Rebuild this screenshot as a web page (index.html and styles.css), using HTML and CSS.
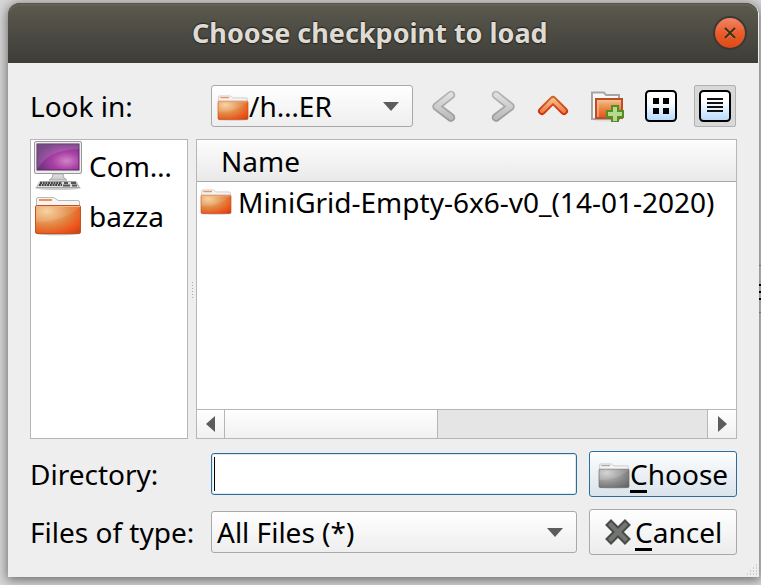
FILE: index.html
```
<!DOCTYPE html>
<html lang="en">
<head>
<meta charset="utf-8">
<title>Choose checkpoint to load</title>
<link rel="stylesheet" href="styles.css">
</head>
<body>
<svg class="defs" width="0" height="0" aria-hidden="true">
  <defs>
    <radialGradient id="orange" cx=".25" cy=".2" r="1"><stop offset="0" stop-color="#f6cf97"/><stop offset=".5" stop-color="#e28743"/><stop offset=".85" stop-color="#ed5118"/><stop offset="1" stop-color="#c84a18"/></radialGradient>
    <radialGradient id="gray" cx=".25" cy=".2" r="1"><stop offset="0" stop-color="#cfcfcf"/><stop offset=".6" stop-color="#8c8c8c"/><stop offset="1" stop-color="#666"/></radialGradient>
    <radialGradient id="purple" cx=".7" cy=".65" r=".75"><stop offset="0" stop-color="#d283c4"/><stop offset=".45" stop-color="#a83fa6"/><stop offset="1" stop-color="#633078"/></radialGradient>
    <linearGradient id="silver" x2="0" y2="1"><stop offset="0" stop-color="#e4e4e4"/><stop offset="1" stop-color="#c6c6c6"/></linearGradient>
    <linearGradient id="blue" x2="0" y2="1"><stop offset=".35" stop-color="#fff"/><stop offset="1" stop-color="#b5d8ff"/></linearGradient>
    <linearGradient id="flame" x2="0" y2="1"><stop offset="0" stop-color="#f3c494"/><stop offset=".5" stop-color="#e98645"/><stop offset="1" stop-color="#e94f17"/></linearGradient>
    <linearGradient id="rim" gradientUnits="userSpaceOnUse" x1="0" y1="5" x2="0" y2="25"><stop offset="0" stop-color="#c6702f"/><stop offset="1" stop-color="#cf2f0b"/></linearGradient>
    <linearGradient id="core" gradientUnits="userSpaceOnUse" x1="0" y1="7" x2="0" y2="24"><stop offset="0" stop-color="#ffc491"/><stop offset="1" stop-color="#ec763f"/></linearGradient>
    <linearGradient id="grayrim" gradientUnits="userSpaceOnUse" x1="0" y1="0" x2="0" y2="32"><stop offset="0" stop-color="#b8b8b8"/><stop offset="1" stop-color="#999"/></linearGradient>
    <linearGradient id="graycore" gradientUnits="userSpaceOnUse" x1="0" y1="2" x2="0" y2="30"><stop offset="0" stop-color="#e3e3e3"/><stop offset="1" stop-color="#b9b9b9"/></linearGradient>
    <symbol id="folder" viewBox="0 0 48 40" preserveAspectRatio="none">
      <ellipse cx="24" cy="37.5" rx="22" ry="1.8" fill="#bbb"/>
      <path d="M2.5 12V3Q2.5 1.5 4 1.5H19Q20.500 1.500 22 3T25 4.500H44Q45.500 4.500 45.500 6V12Z" fill="#f5f5f5" stroke="#b8b8b8"/>
      <rect x="5" y="3" width="13" height="2" fill="#f0905c"/>
      <rect x="1.500" y="9.500" width="45" height="28" rx="1.500" fill="url(#orange)" stroke="#c25320"/>
      <path d="M2 10.500H46" stroke="#efb07e"/>
      <path d="M2 26Q29 26 46 11V10H2Z" fill="#fff" opacity=".1"/>
    </symbol>
    <symbol id="folder-gray" viewBox="0 0 48 40" preserveAspectRatio="none">
      <ellipse cx="24" cy="37.500" rx="22" ry="1.800" fill="#bbb"/>
      <path d="M2.500 12V3Q2.500 1.500 4 1.500H19Q20.500 1.500 22 3T25 4.500H44Q45.500 4.500 45.500 6V12Z" fill="#f5f5f5" stroke="#b5b5b5"/>
      <rect x="5" y="3" width="13" height="2" fill="#aaa"/>
      <rect x="1.500" y="9.500" width="45" height="28" rx="1.500" fill="url(#gray)" stroke="#686868"/>
      <path d="M2 26Q29 26 46 11V10H2Z" fill="#fff" opacity=".12"/>
    </symbol>
  </defs>
</svg>

<div class="behind"><i></i><i></i><i></i></div>
<section class="dialog">
  <header class="titlebar">
    <h1 class="title">Choose checkpoint to load</h1>
    <button class="close" aria-label="Close"><svg width="12" height="12" viewBox="0 0 12 12"><path d="M1.500 2.500L10.500 11.500M10.500 2.500L1.500 11.500" stroke="#f5a184" stroke-width="1.500"/><path d="M1 1L11 11M11 1L1 11" stroke="#3c3011" stroke-width="2"/></svg></button>
  </header>

  <main class="content">
    <div class="row toolbar">
      <span class="label"><span class="t-look">Look in:</span></span>
      <div class="combo path">
        <svg class="folder-small" width="32" height="26"><use href="#folder"/></svg>
        <span class="t-path">/h…ER</span>
        <svg class="arrow" width="16" height="9"><path d="M0 0H16L8 9Z" fill="#5c5c5c"/></svg>
      </div>
      <div class="tools">
        <span class="tool"><svg width="32" height="32"><path d="M22.500 5L7 16L22.500 27" visibility="hidden"/><path d="M22 5L7.500 16.500L22 27.500" fill="none" stroke="url(#grayrim)" stroke-width="8.500" stroke-linecap="round" stroke-linejoin="round"/><path d="M22 5L7.500 16.500L22 27.500" fill="none" stroke="url(#graycore)" stroke-width="5" stroke-linecap="round" stroke-linejoin="round"/></svg></span>
        <span class="tool"><svg width="32" height="32"><path d="M13 5L27.500 16.500L13 27.500" fill="none" stroke="url(#grayrim)" stroke-width="8.500" stroke-linecap="round" stroke-linejoin="round"/><path d="M13 5L27.500 16.500L13 27.500" fill="none" stroke="url(#graycore)" stroke-width="5" stroke-linecap="round" stroke-linejoin="round"/></svg></span>
        <span class="tool"><svg width="32" height="32"><path d="M5 21L16 10L27 21" fill="none" stroke="url(#rim)" stroke-width="8" stroke-linecap="round" stroke-linejoin="round"/><path d="M5 21L16 10L27 21" fill="none" stroke="url(#core)" stroke-width="4" stroke-linecap="round" stroke-linejoin="round"/></svg></span>
        <span class="tool"><svg width="34" height="32"><ellipse cx="17" cy="30" rx="14" ry="1.500" fill="#ddd"/><path d="M2 29V2.500H14L16 5H29V29Z" fill="#f7f7f7" stroke="#a6a6a6" stroke-width="2"/><rect x="6" y="9" width="26" height="19" fill="url(#flame)" stroke="#bf4d22" stroke-width="2"/><path d="M8 27V11H31" fill="none" stroke="#f6bd92" stroke-width="1.500" opacity=".8"/><path d="M22 16h6v5h5v6h-5v5h-6v-5h-5v-6h5Z" fill="#b7d98d" stroke="#548f25" stroke-width="2"/></svg></span>
        <span class="tool"><svg width="32" height="32"><rect x="1" y="1" width="30" height="30" rx="3.500" fill="url(#blue)" stroke="#000" stroke-width="2"/><path d="M8 8h6v6H8zM18 8h6v6h-6zM8 18h6v6H8zM18 18h6v6h-6z"/></svg></span>
        <span class="tool active"><svg width="32" height="32"><rect x="1" y="1" width="30" height="30" rx="3.500" fill="url(#blue)" stroke="#000" stroke-width="2"/><path d="M8 9H24M8 13H24M8 17H24M8 21H24" stroke="#111" stroke-width="2"/></svg></span>
      </div>
    </div>

    <div class="panes">
      <ul class="places">
        <li>
          <svg width="48" height="50">
            <ellipse cx="24" cy="47" rx="23" ry="2" fill="#ccc"/>
            <path d="M19 33H29L30 37L33 39H15L18 37Z" fill="url(#silver)" stroke="#aaa"/>
            <rect x=".5" y=".5" width="47" height="32" rx="1.500" fill="#ececec" stroke="#999"/>
            <rect x="3" y="3" width="42" height="26" fill="url(#purple)" stroke="#59245f"/>
            <path d="M4 28Q13 9 45 8V3H3V28Z" fill="#fff" opacity=".13"/>
            <path d="M6 40.500H42L45.500 46.500H2.500Z" fill="#ddd" stroke="#a5a5a5"/>
            <path d="M6 42H28M5 44H28" stroke="#444" stroke-width="2" stroke-dasharray="2 .7"/><path d="M30 42H34M29 44.500H36M37 42H42M38 44.500H43" stroke="#555" stroke-width="1.800"/>
          </svg>
          <span class="t-com">Com…</span>
        </li>
        <li><svg width="48" height="40"><use href="#folder"/></svg><span class="t-bazza">bazza</span></li>
      </ul>
      <div class="splitter"></div>
      <div class="files">
        <div class="head"><span class="t-name">Name</span></div>
        <div class="list">
          <div class="file"><svg width="32" height="26"><use href="#folder"/></svg><span class="t-file">MiniGrid-Empty-6x6-v0_(14-01-2020)</span></div>
        </div>
        <div class="scroll">
          <span class="step left"><svg width="9" height="16"><path d="M9 0V16L0 8Z" fill="#5c5c5c"/></svg></span>
          <span class="thumb"></span>
          <span class="step right"><svg width="9" height="16"><path d="M0 0V16L9 8Z" fill="#5c5c5c"/></svg></span>
        </div>
      </div>
    </div>

    <div class="row">
      <span class="label"><span class="t-dir">Directory:</span></span>
      <div class="input"><span class="caret"></span></div>
      <div class="btn primary"><svg width="32" height="26"><use href="#folder-gray"/></svg><span class="t-choose"><span class="key">C</span>hoose</span></div>
    </div>

    <div class="row">
      <span class="label"><span class="t-type">Files of type:</span></span>
      <div class="combo filter"><span class="t-all">All Files (*)</span><svg class="arrow" width="16" height="9"><path d="M0 0H16L8 9Z" fill="#5c5c5c"/></svg></div>
      <div class="btn cancel"><svg width="26" height="26"><path d="M6 1.500L13 8.500L20 1.500L24.500 6L17.500 13L24.500 20L20 24.500L13 17.500L6 24.500L1.500 20L8.500 13L1.500 6Z" fill="#727572" stroke="#484b48" stroke-width="2"/></svg><span class="t-cancel"><span class="key">C</span>ancel</span></div>
    </div>
  </main>
  <svg class="grip" width="12" height="12"><path d="M10 1h1M7 4h1M10 4h1M4 7h1M7 7h1M10 7h1M1 10h1M4 10h1M7 10h1M10 10h1" stroke="#aaa"/></svg>
</section>
</body>
</html>
```

FILE: styles.css
```
* { box-sizing: border-box; }
body {
  margin: 0;
  width: 761px;
  height: 585px;
  padding: 3px 2px 8px 8px;
  overflow: hidden;
  position: relative;
  background: #d6d6d6;
  font: 28px/42px "Noto Sans", sans-serif;
  color: #000;
}
.defs { position: absolute; }
svg { display: block; flex: none; }
.behind {
  position: absolute;
  right: 0;
  top: 265px;
  width: 2px;
  height: 48px;
  border: solid #999;
  border-width: 1px 0;
  padding-top: 18px;
}
.behind i { display: block; height: 2px; margin-bottom: 5px; background: #000; }
.dialog {
  position: relative;
  width: 751px;
  height: 574px;
  background: #eee;
  border-radius: 12px 12px 0 0;
  box-shadow: 0 2px 11px 1px rgba(0,0,0,.5);
}
.titlebar {
  width: 750px;
  height: 60px;
  display: flex;
  align-items: center;
  border-radius: 12px 12px 0 0;
  background: linear-gradient(#5c5a4e, #3d3c38);
  box-shadow: inset 0 1px #56564d, inset 0 3px #636152;
}
.title {
  margin: 0 0 0 184px;
  width: 521px;
  font-size: 27px;
  font-weight: 700;
  line-height: 60px;
  color: #dfdbd2;
  white-space: nowrap;
  text-shadow: 0 0 2px #222, 0 -1px 1px #2b2b29, 0 1px 1px #2b2b29;
}
.close {
  width: 34px;
  height: 34px;
  padding: 0;
  border: 2px solid #3b3934;
  border-radius: 50%;
  display: flex;
  align-items: center;
  justify-content: center;
  background: linear-gradient(#f48565, #e95c2d 50%, #df4a16);
}
.content {
  padding: 22px;
  display: flex;
  flex-direction: column;
  gap: 12px;
}
.row { display: flex; align-items: center; height: 46px; }
.row.toolbar { height: 42px; }
.label { width: 181px; flex: none; white-space: nowrap; }
.combo {
  height: 42px;
  border: 1px solid #a9a9a9;
  border-radius: 3px;
  background: linear-gradient(#fff, #eee);
  display: flex;
  align-items: center;
  line-height: 40px;
  white-space: nowrap;
}
.path { width: 202px; padding: 0 13px 0 5px; }
.folder-small { margin-top: 4px; }
.filter { width: 366px; padding: 0 13px 0 5px; }
.arrow { margin-left: auto; }
.tools { display: flex; gap: 12px; margin-left: 11px; }
.tool {
  width: 42px;
  height: 42px;
  display: flex;
  align-items: center;
  justify-content: center;
  border: 1px solid transparent;
  border-radius: 2px;
}
.tool.active { background: #d8d8d8; border-color: #b1b1b1; }
.panes { display: flex; height: 300px; }
.places {
  width: 158px;
  margin: 0;
  padding: 1px 2px;
  list-style: none;
  background: #fff;
  border: 1px solid #b6b6b6;
}
.places li { height: 50px; display: flex; align-items: center; gap: 7px; white-space: nowrap; padding-left: 1px; }
.splitter {
  width: 8px;
  padding: 143px 0 0 4px;
}
.splitter::before {
  content: "";
  display: block;
  width: 1px;
  height: 16px;
  background: repeating-linear-gradient(#aaa 0 1px, transparent 1px 3px);
}
.files {
  width: 541px;
  border: 1px solid #b6b6b6;
  background: #fff;
  display: flex;
  flex-direction: column;
}
.head {
  height: 42px;
  padding-left: 24px;
  border-bottom: 1px solid #aaa;
  background: linear-gradient(#fdfdfd, #f3f3f3 50%, #e9e9e9);
}
.list { flex: 1; }
.file { height: 40px; display: flex; align-items: center; padding-left: 3px; gap: 6px; white-space: nowrap; line-height: 40px; }
.scroll {
  height: 29px;
  display: flex;
  border-top: 1px solid #b6b6b6;
  background: #e5e5e5;
}
.step { width: 28px; display: flex; align-items: center; justify-content: center; background: linear-gradient(#fff, #f1f1f1); }
.left { border-right: 1px solid #b6b6b6; }
.right { border-left: 1px solid #b6b6b6; margin-left: auto; width: 29px; }
.thumb { width: 213px; border-right: 1px solid #b6b6b6; background: linear-gradient(#fff, #f1f1f1); }
.input {
  width: 366px;
  height: 42px;
  border: 1px solid #286f9f;
  border-radius: 3px;
  background: #fff;
  box-shadow: inset 0 0 0 1px #dbe8f0;
  padding: 3px 2px;
}
.caret { display: block; width: 1px; height: 34px; background: #000; }
.btn {
  width: 148px;
  height: 46px;
  margin-left: 12px;
  display: flex;
  align-items: center;
  border: 1px solid #a9a9a9;
  border-radius: 3px;
  background: linear-gradient(#fff, #ececec);
  white-space: nowrap;
  padding-left: 8px;
}
.primary { border-color: #286f9f; background: linear-gradient(#fdfeff, #dae3eb); }
.primary svg { margin-top: 4px; }
.cancel { padding-left: 15px; }
.cancel svg { margin-right: 4px; }
.key { position: relative; }
.key::after { content: ""; position: absolute; left: 0; width: 17px; bottom: 0; height: 3px; background: #000; }
.grip { position: absolute; right: 1px; bottom: 1px; }
```
